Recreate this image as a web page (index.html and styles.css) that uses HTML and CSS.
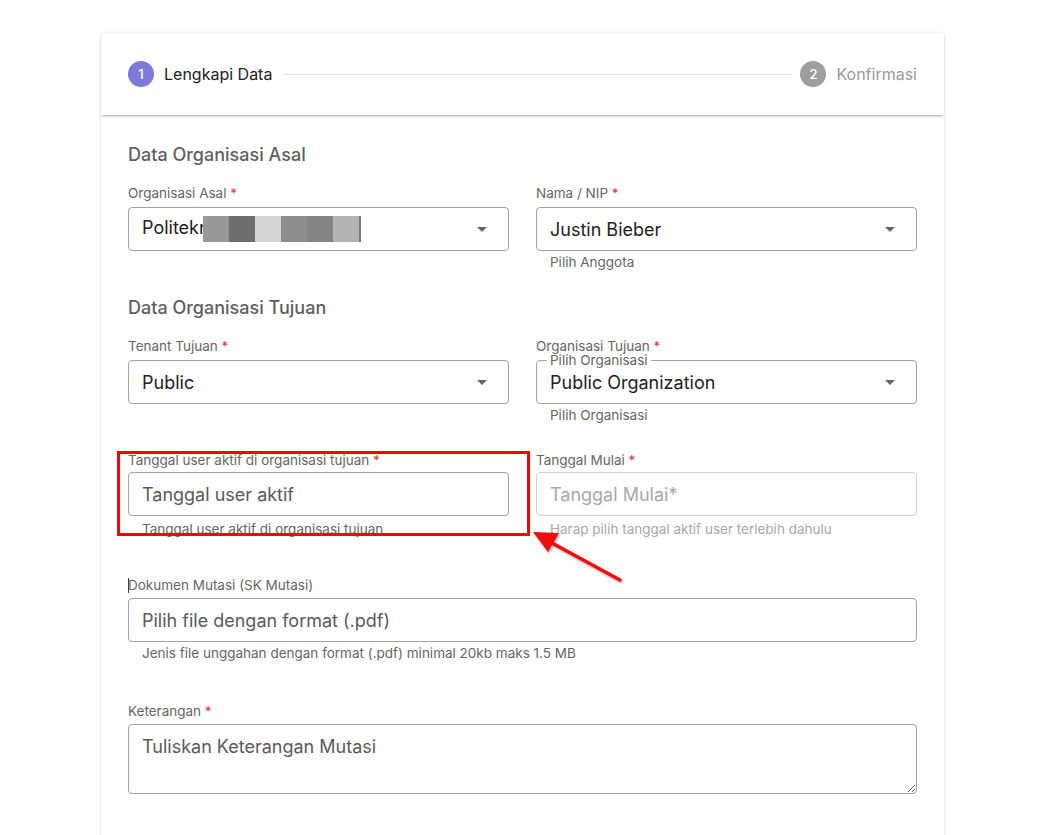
FILE: index.html
```html
<!DOCTYPE html>
<html lang="id">
<head>
  <meta charset="UTF-8">
  <title>Mutasi User</title>
  <link rel="stylesheet" href="styles.css">
</head>
<body>

  <div class="card">
    <div class="stepper">
      <div class="step active">
        <span class="step-num">1</span>
        <span class="step-label">Lengkapi Data</span>
      </div>
      <div class="step-line"></div>
      <div class="step">
        <span class="step-num">2</span>
        <span class="step-label">Konfirmasi</span>
      </div>
    </div>

    <div class="card-body">
      <h3 class="section-title">Data Organisasi Asal</h3>
      <div class="row">
        <div class="field">
          <label>Organisasi Asal <span class="req">*</span></label>
          <div class="select">
            <span class="value">Politekn<span class="censor"><i class="c1"></i><i class="c2"></i><i class="c3"></i><i class="c4"></i><i class="c5"></i><i class="c6"></i><i class="c7"></i></span></span>
            <span class="caret"></span>
          </div>
        </div>
        <div class="field">
          <label>Nama / NIP <span class="req">*</span></label>
          <div class="select">
            <span class="value">Justin Bieber</span>
            <span class="caret"></span>
          </div>
          <div class="hint">Pilih Anggota</div>
        </div>
      </div>

      <h3 class="section-title">Data Organisasi Tujuan</h3>
      <div class="row">
        <div class="field">
          <label>Tenant Tujuan <span class="req">*</span></label>
          <div class="select">
            <span class="value">Public</span>
            <span class="caret"></span>
          </div>
        </div>
        <div class="field">
          <label>Organisasi Tujuan <span class="req">*</span></label>
          <div class="select outlined">
            <span class="legend">Pilih Organisasi</span>
            <span class="value">Public Organization</span>
            <span class="caret"></span>
          </div>
          <div class="hint">Pilih Organisasi</div>
        </div>
      </div>

      <div class="row row-dates">
        <div class="field">
          <label>Tanggal user aktif di organisasi tujuan <span class="req">*</span></label>
          <input class="input" type="text" placeholder="Tanggal user aktif">
          <div class="hint">Tanggal user aktif di organisasi tujuan</div>
        </div>
        <div class="field disabled">
          <label>Tanggal Mulai <span class="req">*</span></label>
          <input class="input" type="text" placeholder="Tanggal Mulai*" disabled>
          <div class="hint">Harap pilih tanggal aktif user terlebih dahulu</div>
        </div>
      </div>

      <div class="field full">
        <label><span class="cursor"></span>Dokumen Mutasi (SK Mutasi)</label>
        <input class="input" type="text" placeholder="Pilih file dengan format (.pdf)">
        <div class="hint">Jenis file unggahan dengan format (.pdf) minimal 20kb maks 1.5 MB</div>
      </div>

      <div class="field full">
        <label>Keterangan <span class="req">*</span></label>
        <textarea class="input textarea" placeholder="Tuliskan Keterangan Mutasi"></textarea>
      </div>
    </div>
  </div>

  <svg class="annotation" width="1044" height="835" viewBox="0 0 1044 835">
    <defs>
      <filter id="shadow" x="-20%" y="-20%" width="140%" height="140%">
        <feDropShadow dx="1" dy="1.5" stdDeviation="1.2" flood-color="#000" flood-opacity="0.35"/>
      </filter>
    </defs>
    <rect x="118.5" y="452.5" width="410" height="82" fill="none" stroke="#ff0000" stroke-width="3"/>
    <g filter="url(#shadow)">
      <line x1="620" y1="580" x2="552" y2="543" stroke="#f01010" stroke-width="3.5" stroke-linecap="round"/>
      <polygon points="533,532 559,533 548,552" fill="#f01010"/>
    </g>
  </svg>

</body>
</html>
```

FILE: styles.css
```css
* {
  box-sizing: border-box;
}

body {
  margin: 0;
  background: #fff;
  font-family: Inter, "Noto Sans", sans-serif;
  color: #222;
  height: 835px;
  overflow: hidden;
}

.card {
  width: 843px;
  margin: 33px 0 0 101px;
  background: #fff;
  border-radius: 4px 4px 0 0;
  box-shadow: 0 0 3px rgba(0, 0, 0, 0.12), 0 1px 4px rgba(0, 0, 0, 0.06);
  min-height: 820px;
}

/* stepper */
.stepper {
  display: flex;
  align-items: center;
  height: 82px;
  padding: 0 27px;
  box-shadow: 0 2px 2px -1px rgba(0, 0, 0, 0.35);
  position: relative;
}

.step {
  display: flex;
  align-items: center;
  gap: 10px;
}

.step-num {
  width: 26px;
  height: 26px;
  border-radius: 50%;
  background: #9e9e9e;
  color: #fff;
  font-size: 13px;
  font-weight: 500;
  display: flex;
  align-items: center;
  justify-content: center;
}

.step-label {
  font-size: 16px;
  color: #9a9a9a;
}

.step.active .step-num {
  background: #7f79d9;
}

.step.active .step-label {
  color: #222;
}

.step-line {
  flex: 1;
  height: 1px;
  background: #ddd;
  margin: 0 9px 0 11px;
}

/* form */
.card-body {
  padding: 27px 27px 40px;
}

.section-title {
  margin: 0 0 18px;
  font-size: 18px;
  line-height: 25px;
  font-weight: 500;
  color: #5f5f5f;
}

.row {
  display: grid;
  grid-template-columns: 1fr 1fr;
  column-gap: 27px;
  margin-bottom: 24px;
}

.row-dates {
  margin-top: 28px;
  margin-bottom: 39px;
}

.row-dates .hint {
  margin-top: 4px;
}

.field {
  display: flex;
  flex-direction: column;
}

.field.full {
  margin-bottom: 41px;
}

.field label {
  font-size: 13.5px;
  line-height: 16px;
  color: #666;
  margin-bottom: 6px;
}

.row-dates .field label {
  margin-bottom: 4px;
}

.field.full label {
  margin-bottom: 5px;
}

.req {
  color: #e53935;
}

.cursor {
  display: inline-block;
  width: 1px;
  height: 15px;
  background: #444;
  vertical-align: -3px;
  margin-right: -1px;
}

.select,
.input {
  height: 44px;
  border: 1px solid #a3a3a3;
  border-radius: 4px;
  background: #fff;
  display: flex;
  align-items: center;
  padding: 0 14px 0 13px;
  font-family: inherit;
  font-size: 18px;
  color: #222;
  position: relative;
}

.input {
  width: 100%;
  outline: none;
}

.input::placeholder {
  color: #5a5a5a;
}

.field.disabled .input {
  border-color: #cfcfcf;
  background: #fff;
}

.field.disabled .input::placeholder {
  color: #a8a8a8;
}

.field.disabled .hint {
  color: #a8a8a8;
}

.textarea {
  height: 70px;
  padding-top: 11px;
  resize: vertical;
  display: block;
}

.select .value {
  flex: 1;
  white-space: nowrap;
}

.caret {
  width: 0;
  height: 0;
  border-left: 5px solid transparent;
  border-right: 5px solid transparent;
  border-top: 5px solid #666;
  margin-right: 7px;
}

.legend {
  position: absolute;
  top: -7px;
  left: 10px;
  padding: 0 3px;
  background: #fff;
  font-size: 13.5px;
  line-height: 12px;
  color: #666;
}

.hint {
  font-size: 13.5px;
  line-height: 18px;
  color: #666;
  margin-top: 2px;
  padding-left: 14px;
}

/* redacted name */
.censor {
  display: inline-flex;
  vertical-align: -8px;
  margin-left: -7px;
}

.censor i {
  display: block;
  width: 26px;
  height: 26px;
}

.censor .c1 { background: #999; }
.censor .c2 { background: #6e6e6e; }
.censor .c3 { background: #d4d4d4; }
.censor .c4 { background: #8e8e8e; }
.censor .c5 { background: #848484; }
.censor .c6 { background: #b3b3b3; }
.censor .c7 { background: #7a7a7a; width: 2px; }

/* screenshot markup */
.annotation {
  position: absolute;
  left: 0;
  top: 0;
  pointer-events: none;
}
```
